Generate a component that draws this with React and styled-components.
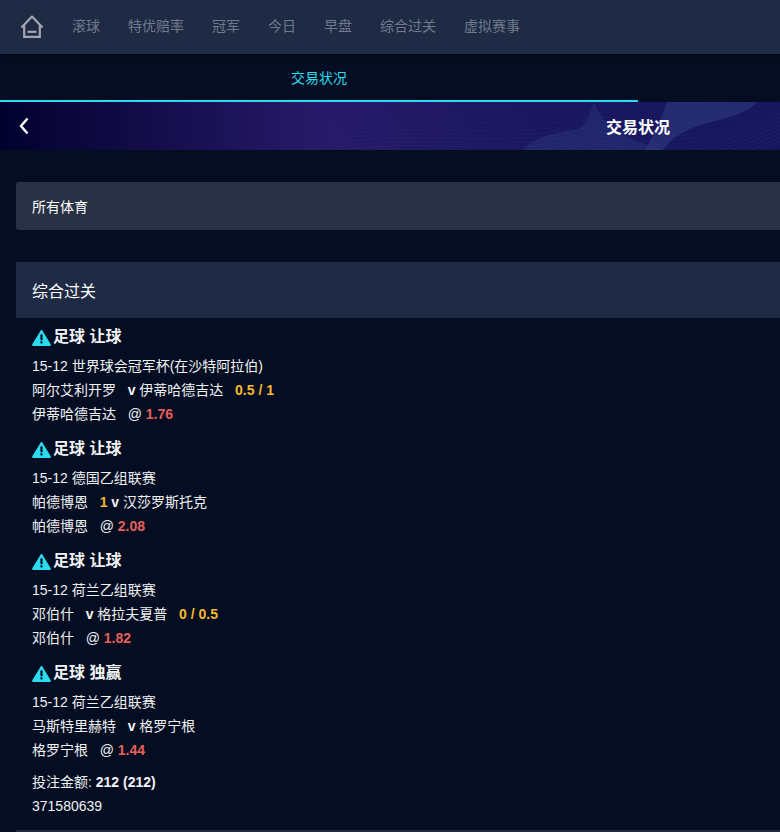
import React from 'react'
import styled, { createGlobalStyle } from 'styled-components'

const GlobalStyle = createGlobalStyle`
  html, body {
    margin: 0;
    padding: 0;
    background: #040d21;
    overflow: hidden;
  }
  body {
    font-family: "Liberation Sans", "Noto Sans CJK SC", sans-serif;
    color: #fff;
    font-size: 14px;
  }
`

const Page = styled.div`
  width: 1276px;
  height: 832px;
  overflow: hidden;
  background: #040d21;
`

const TopBar = styled.header`
  height: 54px;
  background: #1f2a44;
  display: flex;
  align-items: center;
  padding-left: 20px;
  box-shadow: 0 2px 6px rgba(0, 0, 0, 0.5);
  position: relative;
`

const HomeLink = styled.a`
  display: flex;
  width: 24px;
  height: 24px;
  margin-right: 28px;
  margin-top: -2px;
  color: #a3a7b2;
`

const NavList = styled.nav`
  display: flex;
  gap: 28px;
  margin-top: -2px;
`

const NavItem = styled.a`
  font-size: 14px;
  line-height: 20px;
  color: #6f7a8e;
`

const TabRow = styled.div`
  width: 638px;
  height: 46px;
  display: flex;
  align-items: center;
  justify-content: center;
  border-bottom: 2px solid #2adcf0;
`

const TabLabel = styled.span`
  font-size: 14px;
  line-height: 20px;
  color: #2adcf0;
  padding-top: 1px;
`

const Banner = styled.div`
  position: relative;
  height: 48px;
  display: flex;
  align-items: center;
  justify-content: center;
  background: linear-gradient(90deg, #02012e 0%, #271a69 25%, #1a1760 42%, #15165e 62%, #1a1760 100%);
  overflow: hidden;
`

const BannerWaves = styled.svg`
  position: absolute;
  inset: 0;
  width: 100%;
  height: 100%;
`

const BackIcon = styled.svg`
  position: absolute;
  left: 18px;
  top: 15px;
  width: 12px;
  height: 18px;
`

const BannerTitle = styled.h1`
  position: relative;
  margin: 4px 0 0;
  font-size: 16px;
  line-height: 24px;
  font-weight: 700;
  color: #fff;
`

const Content = styled.main`
  padding: 32px 0 0 16px;
`

const FilterBar = styled.div`
  height: 48px;
  display: flex;
  align-items: center;
  padding-left: 16px;
  background: #293244;
  border-radius: 3px;
  font-size: 14px;
  margin-bottom: 32px;
`

const SectionHeader = styled.div`
  height: 56px;
  display: flex;
  align-items: center;
  padding-left: 16px;
  background: #1f2a44;
  font-size: 16px;
`

const BetList = styled.div`
  padding: 7px 16px 0;
`

const Bet = styled.section`
  margin-bottom: 11px;
`

const BetTitle = styled.h3`
  display: flex;
  align-items: center;
  gap: 2px;
  margin: 0 0 5px;
  height: 24px;
  font-size: 16px;
  line-height: 24px;
  font-weight: 700;
  color: #f2f3f5;
`

const Line = styled.div`
  height: 24px;
  font-size: 14px;
  line-height: 24px;
  color: #f0f1f4;
  white-space: pre;
`

const Strong = styled.b`
  color: ${(p) => p.$color || '#f4f5f7'};
  font-weight: 700;
`

const Footer = styled.div`
  margin-top: -3px;
`

const BottomRule = styled.div`
  height: 3px;
  margin-top: 12px;
  background: #1f2a44;
`

const navItems = ['滚球', '特优赔率', '冠军', '今日', '早盘', '综合过关', '虚拟赛事']

const bets = [
  {
    type: '足球 让球',
    league: '15-12 世界球会冠军杯(在沙特阿拉伯)',
    home: '阿尔艾利开罗',
    away: '伊蒂哈德吉达',
    awayHcp: '0.5 / 1',
    pick: '伊蒂哈德吉达',
    odds: '1.76',
  },
  {
    type: '足球 让球',
    league: '15-12 德国乙组联赛',
    home: '帕德博恩',
    homeHcp: '1',
    away: '汉莎罗斯托克',
    pick: '帕德博恩',
    odds: '2.08',
  },
  {
    type: '足球 让球',
    league: '15-12 荷兰乙组联赛',
    home: '邓伯什',
    away: '格拉夫夏普',
    awayHcp: '0 / 0.5',
    pick: '邓伯什',
    odds: '1.82',
  },
  {
    type: '足球 独赢',
    league: '15-12 荷兰乙组联赛',
    home: '马斯特里赫特',
    away: '格罗宁根',
    pick: '格罗宁根',
    odds: '1.44',
  },
]

const HomeIcon = () => (
  <svg width="24" height="24" viewBox="0 0 24 24" fill="none" stroke="currentColor" strokeWidth="2.2">
    <path d="M1.5 13.5 12 2.6 22.5 13.5" strokeLinejoin="round" />
    <path d="M4.2 11.5V22.8h15.6V11.5" />
    <path d="M7.5 17.8h9" />
  </svg>
)

const AlertIcon = () => (
  <svg width="19" height="17" viewBox="0 0 19 17">
    <path
      d="M9.5 1 18.4 15.6a.6.6 0 0 1-.5.9H1.1a.6.6 0 0 1-.5-.9z"
      fill="#2adcf0"
      stroke="#2adcf0"
      strokeLinejoin="round"
    />
    <rect x="8.4" y="5.4" width="2.2" height="5.8" fill="#040d21" />
    <rect x="8.4" y="12.3" width="2.2" height="2.1" fill="#040d21" />
  </svg>
)

const Waves = () => {
  // thin curves standing in for the banner's background texture
  const lines = []
  for (let i = 0; i < 14; i++) {
    const y = 4 + i * 4
    lines.push(
      <path
        key={i}
        d={`M330 ${y + 14} C 400 ${y + 2}, 460 ${y + 12}, 530 ${y + 8} S 590 ${y - 20}, 640 ${y + 8} S 740 ${y - 4}, 800 ${y - 24}`}
        fill="none"
        stroke="#3f4f96"
        strokeOpacity={0.07 + i * 0.009}
        strokeWidth="1"
      />,
    )
  }
  return (
    <BannerWaves viewBox="0 0 1276 48" preserveAspectRatio="none">
      <path d="M523 48C535 34 560 30 578 27C588 22 590 10 594 0C600 20 620 36 663 48Z" fill="#2a3378" fillOpacity="0.5" />
      <path d="M667 0H757C748 9 738 14 707 21C688 27 672 34 663 48H645C655 30 662 15 667 0Z" fill="#2f3a7c" fillOpacity="0.6" />
      {lines}
    </BannerWaves>
  )
}

const BetCard = ({ bet }) => (
  <Bet>
    <BetTitle>
      <AlertIcon />
      {bet.type}
    </BetTitle>
    <Line>{bet.league}</Line>
    <Line>
      {bet.home}
      {'   '}
      {bet.homeHcp && <Strong $color="#f5b82e">{bet.homeHcp} </Strong>}
      <Strong>v</Strong> {bet.away}
      {bet.awayHcp && (
        <>
          {'   '}
          <Strong $color="#f5b82e">{bet.awayHcp}</Strong>
        </>
      )}
    </Line>
    <Line>
      {bet.pick}
      {'   '}@ <Strong $color="#e5605a">{bet.odds}</Strong>
    </Line>
  </Bet>
)

const App = () => {
  return (
    <Page>
      <GlobalStyle />
      <TopBar>
        <HomeLink>
          <HomeIcon />
        </HomeLink>
        <NavList>
          {navItems.map((item) => (
            <NavItem key={item}>{item}</NavItem>
          ))}
        </NavList>
      </TopBar>
      <TabRow>
        <TabLabel>交易状况</TabLabel>
      </TabRow>
      <Banner>
        <Waves />
        <BackIcon viewBox="0 0 12 18" fill="none" stroke="#fff" strokeWidth="2.4">
          <path d="M9.5 1.5 3 9l6.5 7.5" />
        </BackIcon>
        <BannerTitle>交易状况</BannerTitle>
      </Banner>
      <Content>
        <FilterBar>所有体育</FilterBar>
        <SectionHeader>综合过关</SectionHeader>
        <BetList>
          {bets.map((bet, i) => (
            <BetCard key={i} bet={bet} />
          ))}
          <Footer>
            <Line>
              投注金额: <Strong>212 (212)</Strong>
            </Line>
            <Line>371580639</Line>
          </Footer>
        </BetList>
        <BottomRule />
      </Content>
    </Page>
  )
}

export default App
